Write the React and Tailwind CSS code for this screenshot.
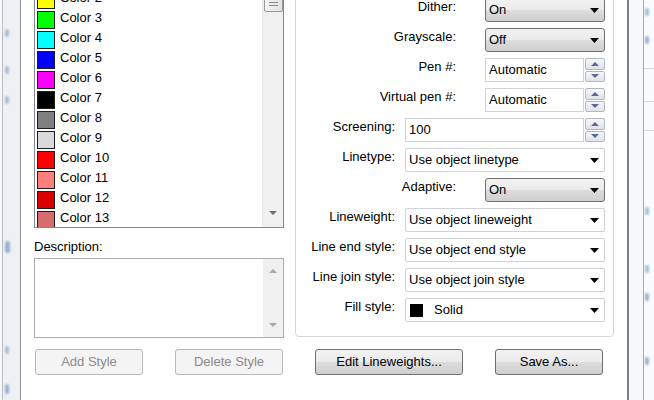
import React from 'react';

const colors = [
  { name: 'Color 1', swatch: 'bg-[#ff0000]' },
  { name: 'Color 2', swatch: 'bg-[#ffff00]' },
  { name: 'Color 3', swatch: 'bg-[#00ff00]' },
  { name: 'Color 4', swatch: 'bg-[#00ffff]' },
  { name: 'Color 5', swatch: 'bg-[#0000ff]' },
  { name: 'Color 6', swatch: 'bg-[#ff00ff]' },
  { name: 'Color 7', swatch: 'bg-[#000000]' },
  { name: 'Color 8', swatch: 'bg-[#808080]' },
  { name: 'Color 9', swatch: 'bg-[#d9d9d9]' },
  { name: 'Color 10', swatch: 'bg-[#ff0000]' },
  { name: 'Color 11', swatch: 'bg-[#ff7f7f]' },
  { name: 'Color 12', swatch: 'bg-[#d80000]' },
  { name: 'Color 13', swatch: 'bg-[#d76c6c]' },
];

const btnGradient = 'bg-[linear-gradient(#f2f2f2,#ebebeb_50%,#dddddd_50%,#cfcfcf)]';

const DownArrow = ({ className = 'fill-black' }) => (
  <svg width="9" height="5" viewBox="0 0 9 5" className={className}>
    <polygon points="0,0 9,0 4.5,5" />
  </svg>
);

const SmallArrow = ({ up, className }) => (
  <svg width="8" height="4" viewBox="0 0 8 4" className={className}>
    <polygon points={up ? '0,4 8,4 4,0' : '0,0 8,0 4,4'} />
  </svg>
);

// Win7 style drop-down button (Dither, Grayscale, Adaptive)
const ComboButton = ({ value }) => (
  <div className={`w-[120px] h-[24px] rounded-[3px] border border-[#707070] ${btnGradient} flex items-center justify-between pl-[3px] pr-[5px]`}>
    <span>{value}</span>
    <DownArrow />
  </div>
);

// flat drop-down list
const Select = ({ children }) => (
  <div className="w-[200px] h-[24px] rounded-[2px] border border-[#cfd2d6] bg-white flex items-center justify-between pl-[3px] pr-[5px]">
    <div className="flex items-center">{children}</div>
    <DownArrow />
  </div>
);

const SpinHalf = ({ up }) => (
  <div className="flex-1 rounded-[2px] border border-[#b3b8c0] bg-[linear-gradient(#f6f7f9,#dfe3ea)] flex items-center justify-center">
    <SmallArrow up={up} className="fill-[#5a6a93]" />
  </div>
);

const Spinner = ({ value, wide }) => (
  <div className={wide ? 'w-[200px] h-[24px] flex' : 'w-[120px] h-[24px] flex'}>
    <div className="flex-1 border border-[#cfd2d6] bg-white flex items-center pl-[3px]">{value}</div>
    <div className="w-[20px] ml-[1px] flex flex-col gap-[1px]">
      <SpinHalf up />
      <SpinHalf />
    </div>
  </div>
);

const Row = ({ label, wide, children }) => (
  <div className="flex justify-end h-[24px]">
    <span className={wide ? 'leading-[16px] pt-[1px] mr-[10px] whitespace-nowrap' : 'leading-[16px] pt-[1px] mr-[29px] whitespace-nowrap'}>
      {label}
    </span>
    {children}
  </div>
);

const Button = ({ children, disabled, className = '' }) => (
  <div
    className={`h-[26px] rounded-[3px] border flex items-center justify-center ${className} ${
      disabled ? 'border-[#b5b9bc] bg-[#f4f4f4] text-[#8a8a8a]' : `border-[#707070] ${btnGradient} text-black`
    }`}
  >
    {children}
  </div>
);

const LeftEdge = () => (
  <div className="w-[21px] h-full flex shrink-0">
    <div className="w-[2px] bg-[#f7f7f7]" />
    <div className="w-[1px] bg-[#b9bec4]" />
    <div className="w-[17px] bg-[#eef1f4] flex flex-col pl-[2px]">
      <div className="mt-[29px] w-[4px] h-[8px] rounded-full bg-[#a7bcd9] blur-[1px]" />
      <div className="mt-[29px] w-[4px] h-[8px] rounded-full bg-[#a7bcd9] blur-[1px]" />
      <div className="mt-[22px] w-[4px] h-[8px] rounded-full bg-[#a7bcd9] blur-[1px]" />
      <div className="mt-[137px] w-[5px] h-[12px] rounded-full bg-[#98b0d2] blur-[1px]" />
      <div className="mt-[93px] w-[4px] h-[8px] rounded-full bg-[#a7bcd9] blur-[1px]" />
      <div className="mt-[30px] w-[4px] h-[10px] rounded-full bg-[#98b0d2] blur-[1px]" />
    </div>
    <div className="w-[1px] bg-[#8e8e8e]" />
  </div>
);

const RightEdge = () => (
  <div className="w-[27px] h-full flex shrink-0">
    <div className="w-[2px] bg-[#808080]" />
    <div className="w-[14px] bg-[#f6f8fa]" />
    <div className="w-[1px] bg-[#a4aab0]" />
    <div className="flex-1 bg-[#fafbfc] flex flex-col">
      <div className="mt-[8px] ml-[1px] w-[4px] h-[8px] rounded-full bg-[#a7bcd9] blur-[1px]" />
      <div className="mt-[20px] ml-[1px] w-[4px] h-[8px] rounded-full bg-[#98b0d2] blur-[1px]" />
      <div className="mt-[24px] h-[1px] bg-[#d4d8dc]" />
      <div className="mt-[32px] h-[1px] bg-[#d4d8dc]" />
      <div className="mt-[28px] h-[1px] bg-[#d4d8dc]" />
      <div className="mt-[76px] ml-[1px] w-[4px] h-[8px] rounded-full bg-[#a7bcd9] blur-[1px]" />
      <div className="mt-[50px] ml-[1px] w-[4px] h-[8px] rounded-full bg-[#a7bcd9] blur-[1px]" />
      <div className="mt-[20px] ml-[1px] w-[4px] h-[8px] rounded-full bg-[#98b0d2] blur-[1px]" />
      <div className="mt-[56px] ml-[1px] w-[4px] h-[8px] rounded-full bg-[#98b0d2] blur-[1px]" />
    </div>
  </div>
);

export default function App() {
  return (
    <div className="w-[654px] h-[400px] overflow-hidden flex bg-white text-[13px] text-black font-['Liberation_Sans',Arial,sans-serif]">
      <LeftEdge />

      <div className="w-[606px] pl-[13px] flex flex-col">
        <div className="flex items-start -mt-[31px]">
          {/* Left column: style list + description */}
          <div className="w-[250px] flex flex-col shrink-0">
            <div className="h-[259px] border border-[#828790] flex overflow-hidden">
              <div className="flex-1 flex flex-col">
                {colors.map((c) => (
                  <div key={c.name} className="flex items-start h-[20px] pl-[2px] shrink-0">
                    <span className={`mt-[1px] w-[18px] h-[18px] border border-[#1e1e1e] shrink-0 ${c.swatch}`} />
                    <span className="ml-[5px] leading-[16px] whitespace-nowrap">{c.name}</span>
                  </div>
                ))}
              </div>
              <div className="w-[21px] bg-[#f0f0f0] border-l border-[#e6e6e6] flex flex-col items-center">
                <div className="w-[19px] h-[42px] rounded-[2px] border border-[#979797] bg-[linear-gradient(90deg,#f4f4f4,#e2e2e2)] flex flex-col justify-end items-center gap-[2px] pb-[5px]">
                  <div className="w-[9px] h-[1px] bg-[#8a8a8a]" />
                  <div className="w-[9px] h-[1px] bg-[#8a8a8a]" />
                  <div className="w-[9px] h-[1px] bg-[#8a8a8a]" />
                </div>
                <div className="mt-auto mb-[12px]">
                  <SmallArrow className="fill-[#707070]" />
                </div>
              </div>
            </div>

            <span className="mt-[11px] leading-[16px]">Description:</span>
            <div className="mt-[3px] h-[80px] border border-[#abadb3] flex">
              <div className="flex-1" />
              <div className="w-[20px] bg-[#f0f0f0] flex flex-col items-center justify-between pt-[10px] pb-[10px]">
                <SmallArrow up className="fill-[#a6a6a6]" />
                <SmallArrow className="fill-[#a6a6a6]" />
              </div>
            </div>
          </div>

          {/* Right column: properties group */}
          <div className="ml-[11px] mt-[19px] w-[319px] border border-[#d5d5d5] rounded-[4px] pt-[9px] pb-[14px] pr-[8px] flex flex-col gap-[6px]">
            <Row label="Dither:">
              <ComboButton value="On" />
            </Row>
            <Row label="Grayscale:">
              <ComboButton value="Off" />
            </Row>
            <Row label="Pen #:">
              <Spinner value="Automatic" />
            </Row>
            <Row label="Virtual pen #:">
              <Spinner value="Automatic" />
            </Row>
            <Row label="Screening:" wide>
              <Spinner value="100" wide />
            </Row>
            <Row label="Linetype:" wide>
              <Select>Use object linetype</Select>
            </Row>
            <Row label="Adaptive:">
              <ComboButton value="On" />
            </Row>
            <Row label="Lineweight:" wide>
              <Select>Use object lineweight</Select>
            </Row>
            <Row label="Line end style:" wide>
              <Select>Use object end style</Select>
            </Row>
            <Row label="Line join style:" wide>
              <Select>Use object join style</Select>
            </Row>
            <Row label="Fill style:" wide>
              <Select>
                <span className="ml-[1px] w-[13px] h-[13px] bg-black" />
                <span className="ml-[11px]">Solid</span>
              </Select>
            </Row>
          </div>
        </div>

        {/* Bottom buttons */}
        <div className="flex mt-[11px] pl-[1px] gap-[32px]">
          <Button disabled className="w-[108px]">Add Style</Button>
          <Button disabled className="w-[108px]">Delete Style</Button>
          <Button className="w-[148px]">Edit Lineweights...</Button>
          <Button className="w-[108px]">Save As...</Button>
        </div>
      </div>

      <RightEdge />
    </div>
  );
}
